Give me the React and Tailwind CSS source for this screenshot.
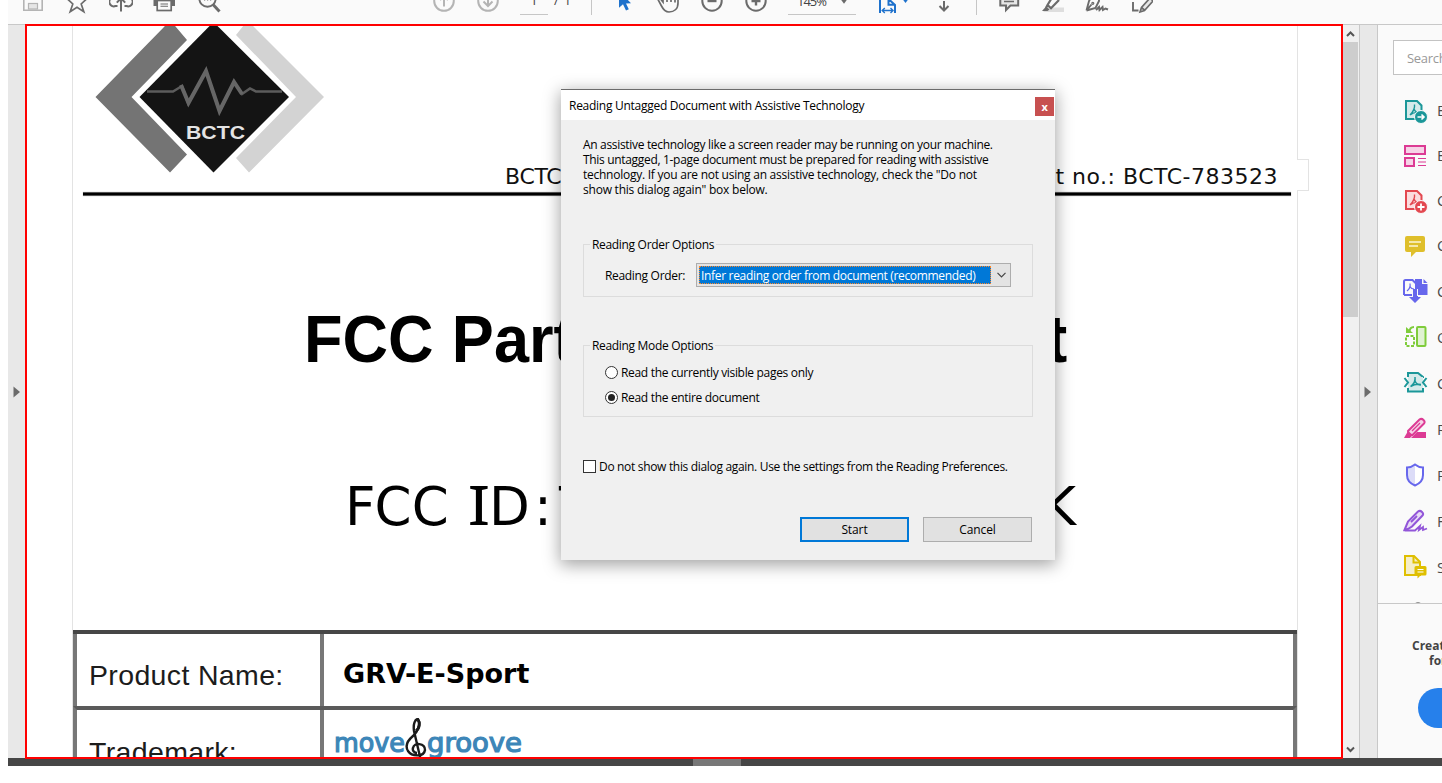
import React from "react";

const G = "#6b6b6b";
const L = "#b4b4b4";

function Tool({ children, className = "" }) {
  return (
    <svg width="24" height="24" viewBox="0 0 24 24" fill="none" stroke={G} strokeWidth="2" className={`shrink-0 ${className}`}>
      {children}
    </svg>
  );
}

function Toolbar() {
  return (
    <div className="flex h-6 w-full overflow-hidden bg-[#fafafa] pl-[13px] font-['Open_Sans',sans-serif]">
      <div className="flex gap-5">
        <Tool>
          <path d="M2.8 -6V10.2H21.2V-6" stroke={L} strokeWidth="1.6" />
          <rect x="7.5" y="3.5" width="9" height="5.5" fill="#e6e6e6" stroke={L} strokeWidth="1.2" />
        </Tool>
        <Tool>
          <path d="M12 -9L14.6 -1.4H22L16.2 3.9L18.8 11.6L12 7.2L5.2 11.6L7.8 3.9L2 -1.4H9.4Z" strokeWidth="1.7" />
        </Tool>
        <Tool>
          <path d="M12 11.5V-5M7.8 2.6L12 -1.6L16.2 2.6M8.5 6H6.5A4.2 4.2 0 0 1 3 -2M15.500 6H17.5A4.2 4.2 0 0 0 21 -2" strokeWidth="2" />
        </Tool>
        <Tool>
          <path d="M0.5 -4H22V6H0.5Z" fill={G} stroke="none" />
          <rect x="4.2" y="0.5" width="14" height="10" fill="#fafafa" strokeWidth="1.7" />
          <path d="M7.5 4H15M7.5 6.3H15" strokeWidth="1.1" />
        </Tool>
        <Tool>
          <circle cx="10.5" cy="-1.5" r="8.2" strokeWidth="1.9" />
          <path d="M16 4.5L22.500 11.5" strokeWidth="3" />
          <path d="M7 0H8.2M10 0H11.2M13 0H14.2" strokeWidth="1.2" />
        </Tool>
      </div>
      <div className="ml-[211px] flex gap-5">
        <Tool>
          <circle cx="12" cy="1" r="9.8" stroke={L} />
          <path d="M12 6.5V-5M8 0L12 -4L16 0" stroke={L} />
        </Tool>
        <Tool>
          <circle cx="12" cy="1" r="9.8" stroke={L} />
          <path d="M12 -5V5.6M7.5 1.5L12 6L16.5 1.5" stroke={L} />
        </Tool>
      </div>
      <div className="ml-[20px] h-[15px] w-7 border-b border-[#c6c6c6] text-center text-[13px] leading-[1px] text-[#444]">1</div>
      <div className="ml-[6px] w-[20px] whitespace-nowrap text-[13px] leading-[1px] tracking-[0.8px] text-[#444]">/ 1</div>
      <div className="ml-[17px] h-[15px] w-px bg-[#c6c6c6]" />
      <div className="ml-[20px] flex gap-5">
        <Tool>
          <path d="M7 -9V7.7L11 4.3L14 10.5L16.8 9.2L14 3.6L19 3.2Z" fill="#1f72cc" stroke="none" />
        </Tool>
        <Tool>
          <path d="M2 -0.500C2 -2 4 -2 5 -0.500L7 2V-6M11 2V-5M15 2V-5M19 2.500V-3M22 -3V3C22 9 18 12 13 12C9 12 7 9 5.500 6L2 -0.500" strokeWidth="1.700" />
        </Tool>
        <Tool>
          <circle cx="12" cy="1" r="9.7" />
          <path d="M7.500 1H16.500" strokeWidth="2.400" />
        </Tool>
        <Tool>
          <circle cx="12" cy="1" r="9.700" />
          <path d="M7.500 1H16.500M12 -4V5.500" strokeWidth="2.400" />
        </Tool>
      </div>
      <div className="ml-[20px] flex h-[15px] w-[68px] border-b border-[#c6c6c6] pl-[9px] text-[13px] leading-[2px] tracking-[-1px] text-[#444]">
        <span className="w-[28px]">145%</span>
        <svg width="8" height="5" viewBox="0 0 8 5" className="ml-[15px]">
          <path d="M0.500 -1H7.500L4 3.800Z" fill={G} />
        </svg>
      </div>
      <div className="ml-[20px] flex">
        <Tool>
          <path d="M4 13V-6M4 -1H12.500L19 5V13M12.500 -1V4.800H19" stroke="#1f72cc" />
          <path d="M6.500 10.500H17M8.800 8L6.200 10.500L8.800 13M14.500 8L17 10.500L14.500 13" stroke="#1f72cc" strokeWidth="1.400" />
        </Tool>
        <svg width="8" height="5" viewBox="0 0 8 5" className="ml-[1px]">
          <path d="M1.500 -1H7.500L4.500 3Z" fill="#1f72cc" />
        </svg>
      </div>
      <Tool className="ml-[23px]">
        <path d="M12 1V10M7.500 6L12 10.500L16.500 6" />
      </Tool>
      <div className="ml-[20px] h-[15px] w-px bg-[#c6c6c6]" />
      <div className="ml-[20px] flex gap-5">
        <Tool>
          <path d="M3.300 -8V5.500H9V10L13.500 5.500H21.200V-8" fill="#e6e6e6" />
          <path d="M7 1.500H17" strokeWidth="1.500" />
        </Tool>
        <Tool>
          <path d="M7 7.500H23V12H2Z" fill="#dedede" stroke="none" />
          <path d="M1 11L5 6.500L8.500 9.500L6.500 11Z" fill={G} stroke="none" />
          <path d="M6.500 5L12 -4M6.500 5L10 8.300L18 0M6.500 5L5 8M16 -4L19 -1" strokeWidth="2.200" />
        </Tool>
        <Tool>
          <path d="M1.500 10.500L4 1L7 -4M1.500 10.500L10.500 8L14 1V-5M1.500 10.500L6.500 4.500" strokeWidth="1.900" />
          <circle cx="7.800" cy="3.300" r="1" strokeWidth="1.200" />
          <path d="M11 10L14 7L14.500 10L17.500 7L18 10L20.500 8.500L23 9.500" strokeWidth="2" />
        </Tool>
        <Tool>
          <path d="M4 2V10.500H9.500" strokeWidth="1.900" />
          <path d="M11 12L12.500 7.500L21 -2L24 1L15.500 10.500ZM13 8L16 10.500" fill="#e6e6e6" strokeWidth="1.700" />
        </Tool>
      </div>
    </div>
  );
}

function BctcLogo() {
  return (
    <svg width="234" height="150" viewBox="94 26 234 150" className="block">
      <path d="M164 27L170 20L187 40L131.500 97L187 154.500L170 172.500L95.500 97Z" fill="#747474" />
      <path d="M254 27L248 20L236 35L296 97L236 158L249 172.500L324 97Z" fill="#d3d3d3" />
      <path d="M213.500 22L289 97L213.500 172.500L139.500 97Z" fill="#141414" />
      <path d="M147 91.500H173L182 86L188 103L206 71L219.500 111L234 82L242 94L250 88.500L256 91.500H282" fill="none" stroke="#5c5c5c" strokeWidth="2.500" />
      <path d="M181 85L188.500 103L206 71L219.500 111L234 82L242 94" fill="none" stroke="#666" strokeWidth="4" />
      <text x="186" y="139" textLength="59" lengthAdjust="spacingAndGlyphs" fontFamily="Liberation Sans, sans-serif" fontWeight="700" fontSize="18.500" fill="#e4e4e4">BCTC</text>
    </svg>
  );
}

function MoveGroove() {
  return (
    <svg width="190" height="40" viewBox="334 718 190 40" className="block">
      <g fontFamily="DejaVu Sans, sans-serif" fontSize="26" fill="#3c86b8" stroke="#3c86b8" strokeWidth="1.200">
        <text x="334" y="751.500" textLength="71" lengthAdjust="spacingAndGlyphs">move</text>
        <text x="427" y="751.500" textLength="95" lengthAdjust="spacingAndGlyphs">groove</text>
      </g>
      <path d="M421 761L414 731C413 724 415 719 418 719C421 724 418 731 413 736C407 741 405 746 408 751C412 757 424 757 425 750C425 743 414 742 413 748C412 751 415 753 417 753" fill="none" stroke="#1b1b1b" strokeWidth="2.400" />
      <path d="M416 731C420 728 420 722 418 720" fill="none" stroke="#1b1b1b" strokeWidth="3" />
    </svg>
  );
}

function DocumentPage() {
  return (
    <div className="h-full min-w-0 flex-1 overflow-hidden border-2 border-[#ff0000] bg-white pl-[45px] text-black">
      <div className="relative flex h-full w-[1226px] flex-col border-x border-[#e3e3e3]">
        <div className="absolute left-[1224px] top-[133px] h-8 w-3 border border-l-0 border-[#e3e3e3] bg-white" />
        <div className="h-[139px] pl-[21px]"><BctcLogo /></div>
        <div className="relative flex h-[27px] justify-between pl-[432px] pr-[19px] font-['DejaVu_Sans',sans-serif] text-[22px] leading-[24px] text-[#111]">
          <span className="tracking-[-0.3px]">BCTC</span>
          <span className="tracking-[0.5px]">t no.: BCTC-783523</span>
        </div>
        <div className="ml-[10px] h-[4px] w-[1208px] border-y border-[#555] bg-black shadow-[0_0_1px_#777]" />
        <div className="mt-[105px] flex h-[76px] justify-between pl-[231px] pr-[230px] font-['Liberation_Sans',sans-serif] text-[67px] font-bold leading-[76px]">
          <span className="origin-left scale-x-[0.94] [word-spacing:1px]">FCC Part</span>
          <span className="origin-right scale-x-[0.94]">t</span>
        </div>
        <div className="mt-[98px] flex h-[64px] pl-[272px] pr-[221px] font-['DejaVu_Sans',sans-serif] text-[53px] leading-[64px]">
          <span className="w-[124px] tracking-[0.3px]"><span className="tracking-[-1px]">F</span>CC</span>
          <span className="w-[20px] origin-center scale-x-125 text-center font-['Noto_Sans',sans-serif] text-[54px] leading-[59px]">I</span>
          <span className="w-[45px]">D</span>
          <span className="w-[25px]">:</span>
          <span>T</span>
          <span className="ml-auto">K</span>
        </div>
        <div className="mt-[91px] flex h-[127px] flex-col border-t-[4px] border-[#464646]">
          <div className="flex h-[72px] border-x-[4px] border-[#777]">
            <div className="w-[247px] border-r-[4px] border-[#777] pl-[12px] font-['Liberation_Sans',sans-serif] text-[28.500px] leading-[82px] tracking-[0.35px] text-[#1c1c1c]">Product Name:</div>
            <div className="pl-[19px] font-['DejaVu_Sans',sans-serif] text-[27px] font-bold leading-[80px]">GRV-E-Sport</div>
          </div>
          <div className="flex h-[52px] overflow-hidden border-x-[4px] border-t-[4px] border-x-[#777] border-t-[#5a5a5a]">
            <div className="h-[80px] w-[247px] shrink-0 border-r-[4px] border-[#777] pl-[12px] font-['Liberation_Sans',sans-serif] text-[28.500px] leading-[84px] tracking-[0.35px] text-[#1c1c1c]">Trademark:</div>
            <div className="pl-[10px] pt-[8px]"><MoveGroove /></div>
          </div>
        </div>
      </div>
    </div>
  );
}

function Scrollbar() {
  return (
    <div className="flex h-[734px] w-4 shrink-0 flex-col border-t border-[#c8c8c8] bg-[#f0f0f0]">
      <svg width="15" height="17" viewBox="0 0 15 17"><path d="M4 11L7.500 7.500L11 11" fill="none" stroke="#555" strokeWidth="2" /></svg>
      <div className="h-[275px] w-[15px] bg-[#cdcdcd]" />
      <svg width="15" height="17" viewBox="0 0 15 17" className="mt-auto"><path d="M4 6.500L7.500 10L11 6.500" fill="none" stroke="#555" strokeWidth="2" /></svg>
    </div>
  );
}

function SideIcon({ children }) {
  return <svg width="26" height="26" viewBox="0 0 26 26" fill="none" strokeWidth="2" className="shrink-0">{children}</svg>;
}

const acro = "M7 17C10 14 12 10 11.500 6.500M11 11C12 13.500 14 15 17 15M7 17C10 14.500 13 14 17 14.500";

const tools = [
  ["Export PDF", <SideIcon>
    <path d="M3 3H14L18.500 7.500V21H3Z" fill="#d5eaea" stroke="#1b9799" />
    <path d={acro} stroke="#1b9799" strokeWidth="1.400" />
    <circle cx="18" cy="19" r="6.500" fill="#1b9799" stroke="#fafafa" strokeWidth="1" />
    <path d="M14.500 19H20.500M18.500 16.500L21 19L18.500 21.500" stroke="#fff" strokeWidth="1.600" />
  </SideIcon>],
  ["Edit PDF", <SideIcon>
    <rect x="2" y="3" width="20" height="8" fill="#f6d3e7" stroke="#dc3b94" />
    <rect x="2" y="15" width="9" height="8" fill="#f6d3e7" stroke="#dc3b94" />
    <path d="M15 15.500H23M15 19H23M15 22.500H23" stroke="#dc3b94" strokeWidth="1.200" />
  </SideIcon>],
  ["Create PDF", <SideIcon>
    <path d="M3 3H14L18.500 7.500V21H3Z" fill="#fbdcde" stroke="#e34850" />
    <path d={acro} stroke="#e34850" strokeWidth="1.400" />
    <circle cx="18" cy="19" r="6.500" fill="#e34850" stroke="#fafafa" strokeWidth="1" />
    <path d="M14.500 19H21.500M18 15.500V22.500" stroke="#fff" strokeWidth="1.800" />
  </SideIcon>],
  ["Comment", <SideIcon>
    <path d="M4 3H20A2 2 0 0 1 22 5V17A2 2 0 0 1 20 19H13L8 24V19H4A2 2 0 0 1 2 17V5A2 2 0 0 1 4 3Z" fill="#dfbf2b" />
    <path d="M6 9H18M6 13H15" stroke="#fdf6d8" strokeWidth="1.500" />
  </SideIcon>],
  ["Combine Files", <SideIcon>
    <path d="M1 17V3.500A1.500 1.500 0 0 1 2.500 2H9.500L13 5.500M1 17H9" stroke="#6767ec" />
    <path d="M4 13C6.500 11 7.500 8 7 5.500M7 8.500C8 10.500 9.500 11 11 11" stroke="#6767ec" strokeWidth="1.200" />
    <path d="M12 1H19V6H24.500V17H15V19H18L12 25L6 19H10V11H12Z" fill="#6767ec" />
    <path d="M20.500 1L24.500 5H20.500Z" fill="#6767ec" />
    <path d="M14.500 11V18" stroke="#fafafa" strokeWidth="1" />
  </SideIcon>],
  ["Organize Pages", <SideIcon>
    <rect x="14" y="3" width="8.500" height="19" rx="1" fill="#e0f2d2" stroke="#7fcc3b" />
    <path d="M3 12H11V22H3Z" stroke="#7fcc3b" strokeDasharray="3 1.500" />
    <path d="M11 3C8 3 6.500 5 6.500 8" stroke="#7fcc3b" />
    <path d="M3 3V9H10Z" fill="#7fcc3b" />
  </SideIcon>],
  ["Compress PDF", <SideIcon>
    <path d="M5 7V3H15L20 7V8M5 18V21.500H20V18" fill="#d5eaea" stroke="#1b9799" />
    <path d="M5 7H20V18H5Z" fill="#d5eaea" />
    <path d="M7.500 16.500C11 14 12.500 10 12 7M12 11C13 13.500 15 15 18 15M7.500 16.500C11 14.500 14 14 18 14.500" stroke="#1b9799" strokeWidth="1.500" />
    <path d="M1.500 8L5 12.500L1.500 17M23.500 8L20 12.500L23.500 17" stroke="#1b9799" />
  </SideIcon>],
  ["Redact", <SideIcon>
    <path d="M14 16H23V22H8Z" fill="#dc3b94" />
    <path d="M5 15L16.500 3.500Q18.500 2 20.500 4Q22.500 6 21 7.500L9.500 19H6Z" fill="#f6d3e7" stroke="#dc3b94" />
    <path d="M5 15L1 22H7L10 19Z" fill="#dc3b94" />
    <path d="M9 15L17 7" stroke="#dc3b94" strokeWidth="1.200" />
  </SideIcon>],
  ["Protect", <SideIcon>
    <path d="M12 2.500C15 5 18 5.500 20 5.500V13C20 18 17 21.500 12 23.500Z" fill="#fff" />
    <path d="M12 2.500C9 5 6 5.500 4 5.500V13C4 18 7 21.500 12 23.500Z" fill="#dcdcf8" />
    <path d="M12 2.500C15 5 18 5.500 20 5.500V13C20 18 17 21.500 12 23.500C7 21.500 4 18 4 13V5.500C6 5.500 9 5 12 2.500Z" stroke="#6767ec" />
  </SideIcon>],
  ["Fill & Sign", <SideIcon>
    <path d="M1.500 22L5 13.500L15 3.500Q17 2 19 4Q21 6 19.500 7.500L9 18.500Q6 21 1.500 22Z" fill="#e8dcf6" stroke="#9256d9" />
    <path d="M8 14L14 8M1.500 22.500H12L17 18L16 22L20 19L20 22L24 20.500" stroke="#9256d9" strokeWidth="1.800" />
  </SideIcon>],
  ["Send for Comments", <SideIcon>
    <path d="M2 2H11L17 8V21H2Z" fill="#f5eec8" stroke="#dfbf00" />
    <path d="M10.500 2V8.500H17" stroke="#dfbf00" />
    <path d="M13 12H22A1.500 1.500 0 0 1 23.500 13.500V20A1.500 1.500 0 0 1 22 21.500H17.500L14.500 24.500V21.500H13A1.500 1.500 0 0 1 11.500 20V13.500A1.500 1.500 0 0 1 13 12Z" fill="#dfbf00" />
    <path d="M14.500 15.500H20.500M14.500 18H20.500" stroke="#fff" strokeWidth="1.200" />
  </SideIcon>],
  ["", <SideIcon>
    <circle cx="15" cy="7.500" r="4.500" stroke="#6b6b6b" strokeWidth="1.500" />
  </SideIcon>],
];

function ToolsPanel() {
  return (
    <div className="h-[734px] w-[65px] shrink-0 overflow-hidden border-l border-t border-[#c8c8c8] bg-[#fafafa] font-['Open_Sans',sans-serif]">
      <div className="flex h-[579px] flex-col overflow-hidden border-b border-[#c8c8c8] pl-[15px] pt-[15px]">
        <div className="h-[35px] w-[240px] shrink-0 border border-[#c3c3c3] bg-white pl-[13px] text-[13px] leading-[34px] tracking-[-0.3px] text-[#999]">Search tools</div>
        <div className="mt-[13px] flex flex-col pl-[10px]">
          {tools.map(([label, icon], i) => (
            <div key={i} className={`flex items-center whitespace-nowrap text-[15px] text-[#4b4b4b] ${i < 4 ? "h-[45px]" : "h-[46px]"}`}>
              {icon}
              <span className="ml-[8px]">{label}</span>
            </div>
          ))}
        </div>
      </div>
      <div className="w-[180px] pt-[34px] text-[12px] font-bold leading-[15px] text-[#444]">
        <div className="pl-[34px]">Create, edit</div>
        <div className="pl-[51px]">forms</div>
      </div>
      <div className="ml-[40px] mt-[20px] h-10 w-[120px] rounded-full bg-[#2680eb]" />
    </div>
  );
}

function Radio({ checked, children }) {
  return (
    <div className="flex h-[25px] items-center">
      <div className="flex size-[13px] items-center justify-center rounded-full border border-[#333] bg-white">
        {checked && <div className="size-[7px] rounded-full bg-[#222]" />}
      </div>
      <span className="ml-[3px]">{children}</span>
    </div>
  );
}

function Dialog() {
  return (
    <div className="absolute left-[561px] top-[89px] flex h-[471px] w-[494px] flex-col border-t border-[#6b6b6b] bg-[#f0f0f0] font-['Open_Sans',sans-serif] text-[12px] leading-[15px] tracking-[-0.32px] text-black shadow-[0_4px_16px_1px_rgba(0,0,0,0.36)]">
      <div className="flex h-[30px] items-start bg-white pl-[8px] pr-[1px]">
        <span className="pt-[8px] tracking-[-0.27px]">Reading Untagged Document with Assistive Technology</span>
        <div className="ml-auto mt-[7px] flex h-[19px] w-[19px] items-center justify-center bg-[#c75050] pb-px text-[11px] font-bold text-white">x</div>
      </div>
      <div className="flex flex-1 flex-col px-[22px] pt-[17px]">
        <p className="h-[60px] whitespace-nowrap">
          An assistive technology like a screen reader may be running on your machine.<br />
          This untagged, 1-page document must be prepared for reading with assistive<br />
          <span className="tracking-[-0.25px]">technology. If you are not using an assistive technology, check the "Do not</span><br />
          <span className="tracking-[-0.22px]">show this dialog again" box below.</span>
        </p>
        <div className="mt-[47px] h-[53px] border border-[#dcdcdc]">
          <div className="-mt-[8px] ml-[6px] w-fit bg-[#f0f0f0] px-[2px]">Reading Order Options</div>
          <div className="mt-[11px] flex h-6 items-center pl-[21px]">
            <span className="w-[91px]">Reading Order:</span>
            <div className="flex h-6 w-[315px] items-center border border-[#adadad] bg-[#e3e3e3] pl-[2px]">
              <div className="flex h-[18px] w-[292px] items-center whitespace-nowrap border border-dotted border-[#ff8728] bg-[#0078d7] pl-px text-white">
                Infer reading order from document (recommended)
              </div>
              <svg width="9" height="6" viewBox="0 0 9 6" className="ml-[6px]"><path d="M0.500 0.800L4.500 4.800L8.500 0.800" fill="none" stroke="#444" strokeWidth="1.200" /></svg>
            </div>
          </div>
        </div>
        <div className="mt-[48px] h-[72px] border border-[#dcdcdc]">
          <div className="-mt-[8px] ml-[6px] w-fit bg-[#f0f0f0] px-[2px]">Reading Mode Options</div>
          <div className="mt-[7px] pl-[21px]">
            <Radio>Read the currently visible pages only</Radio>
            <Radio checked>Read the entire document</Radio>
          </div>
        </div>
        <div className="mt-[42px] flex h-[15px] items-center">
          <div className="size-[13px] border border-[#333] bg-white" />
          <span className="ml-[3px] whitespace-nowrap">Do not show this dialog again. Use the settings from the Reading Preferences.</span>
        </div>
        <div className="mt-[43px] flex justify-end gap-[14px] pr-px">
          <button className="h-[25px] w-[109px] border-2 border-[#0078d7] bg-[#e1e1e1] tracking-[-0.1px]">Start</button>
          <button className="h-[25px] w-[109px] border border-[#adadad] bg-[#e1e1e1] tracking-[-0.1px]">Cancel</button>
        </div>
      </div>
    </div>
  );
}

export default function App() {
  return (
    <div className="relative h-[783px] w-[1442px] overflow-hidden bg-white pl-2">
      <Toolbar />
      <div className="flex h-[735px] bg-[#464646]">
        <div className="flex h-[734px] w-[17px] shrink-0 items-center border-t border-[#c8c8c8] bg-[#e8e8e8]">
          <svg width="8" height="12" viewBox="0 0 8 12" className="ml-[5px]"><path d="M0.500 0.500V11.500L7 6Z" fill="#6b6b6b" /></svg>
        </div>
        <DocumentPage />
        <Scrollbar />
        <div className="flex h-[734px] w-[18px] shrink-0 items-center border-l border-t border-[#c8c8c8] bg-[#e8e8e8]">
          <svg width="8" height="12" viewBox="0 0 8 12" className="ml-[4px]"><path d="M0.500 0.500V11.500L7 6Z" fill="#6b6b6b" /></svg>
        </div>
        <ToolsPanel />
      </div>
      <div className="h-[7px] bg-[#464646] pl-[685px]">
        <div className="h-full w-12 bg-[#777]" />
      </div>
      <Dialog />
    </div>
  );
}
